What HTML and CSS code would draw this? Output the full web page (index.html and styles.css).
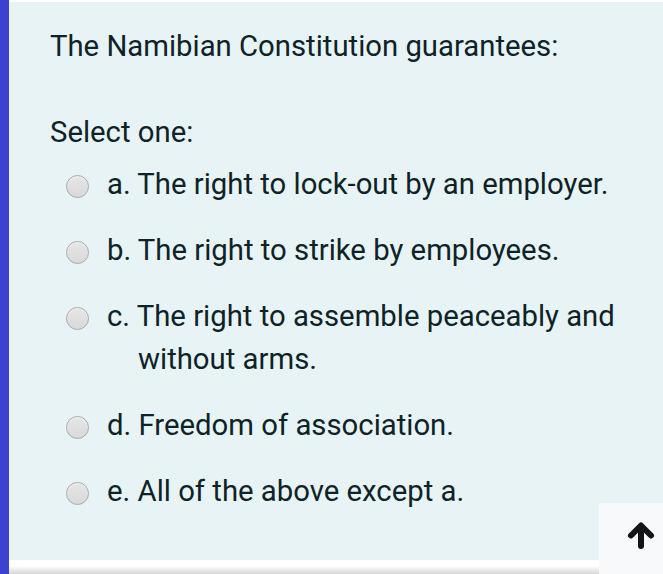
FILE: index.html
```html
<!DOCTYPE html>
<html>
<head>
<meta charset="utf-8">
<link rel="stylesheet" href="styles.css">
</head>
<body>
<div class="page">
  <div class="bar"></div>
  <div class="main">
    <div class="card">
      <p class="question">The Namibian Constitution guarantees:</p>
      <p class="prompt">Select one:</p>
      <div class="options">
        <label class="opt"><span class="radio"></span><span class="txt">a. The right to lock-out by an employer.</span></label>
        <label class="opt"><span class="radio"></span><span class="txt">b. The right to strike by employees.</span></label>
        <label class="opt"><span class="radio"></span><span class="txt">c. The right to assemble peaceably and <span class="indent">without arms.</span></span></label>
        <label class="opt"><span class="radio"></span><span class="txt">d. Freedom of association.</span></label>
        <label class="opt"><span class="radio"></span><span class="txt">e. All of the above except a.</span></label>
      </div>
    </div>
    <div class="footer"></div>
  </div>
</div>
<button class="totop" aria-label="Back to top">
  <svg width="30" height="30" viewBox="0 0 30 30"><path d="M15 26V6M5 15.5L15 5.5L25 15.5" fill="none" stroke="#141414" stroke-width="6" stroke-linecap="round" stroke-linejoin="round"/></svg>
</button>
</body>
</html>
```
FILE: styles.css
```css
html, body { margin: 0; padding: 0; }
body { width: 663px; height: 574px; overflow: hidden; background: #fff; font-family: Roboto, "Liberation Sans", sans-serif; color: #0e2327; }
.page { display: flex; height: 574px; }
.bar { width: 9px; background: #3e41cf; flex: none; }
.main { flex: 1; display: flex; flex-direction: column; }
.card { background: #e7f3f5; margin-top: 2px; height: 558px; box-sizing: border-box; padding: 24px 20px 0 41px; }
.question { margin: 0; font-size: 29.3px; line-height: 40px; }
.prompt { margin: 46px 0 0; font-size: 29.3px; line-height: 40px; }
.options { display: flex; flex-direction: column; gap: 23px; margin-top: 11px; padding-left: 16px; }
.opt { display: flex; align-items: flex-start; font-size: 29.3px; line-height: 43px; }
.radio { width: 21px; height: 21px; border-radius: 50%; border: 1px solid #a9aaaa; background: linear-gradient(#e6e6e6, #d9d9d9); flex: none; margin-top: 12px; margin-right: 18px; box-shadow: inset 0 1px 1px rgba(255,255,255,.6); }
.txt { display: block; }
.indent { display: block; padding-left: 31px; }
.footer { flex: 1; background: linear-gradient(#fff 0, #fff 6px, #d6d6d6 14px); }
.totop { position: absolute; left: 599px; top: 503px; width: 64px; height: 71px; border: 0; background: #f7f9fa; display: flex; align-items: flex-start; justify-content: flex-start; padding: 17px 0 0 27px; box-sizing: border-box; }
.totop svg { display: block; }
```
